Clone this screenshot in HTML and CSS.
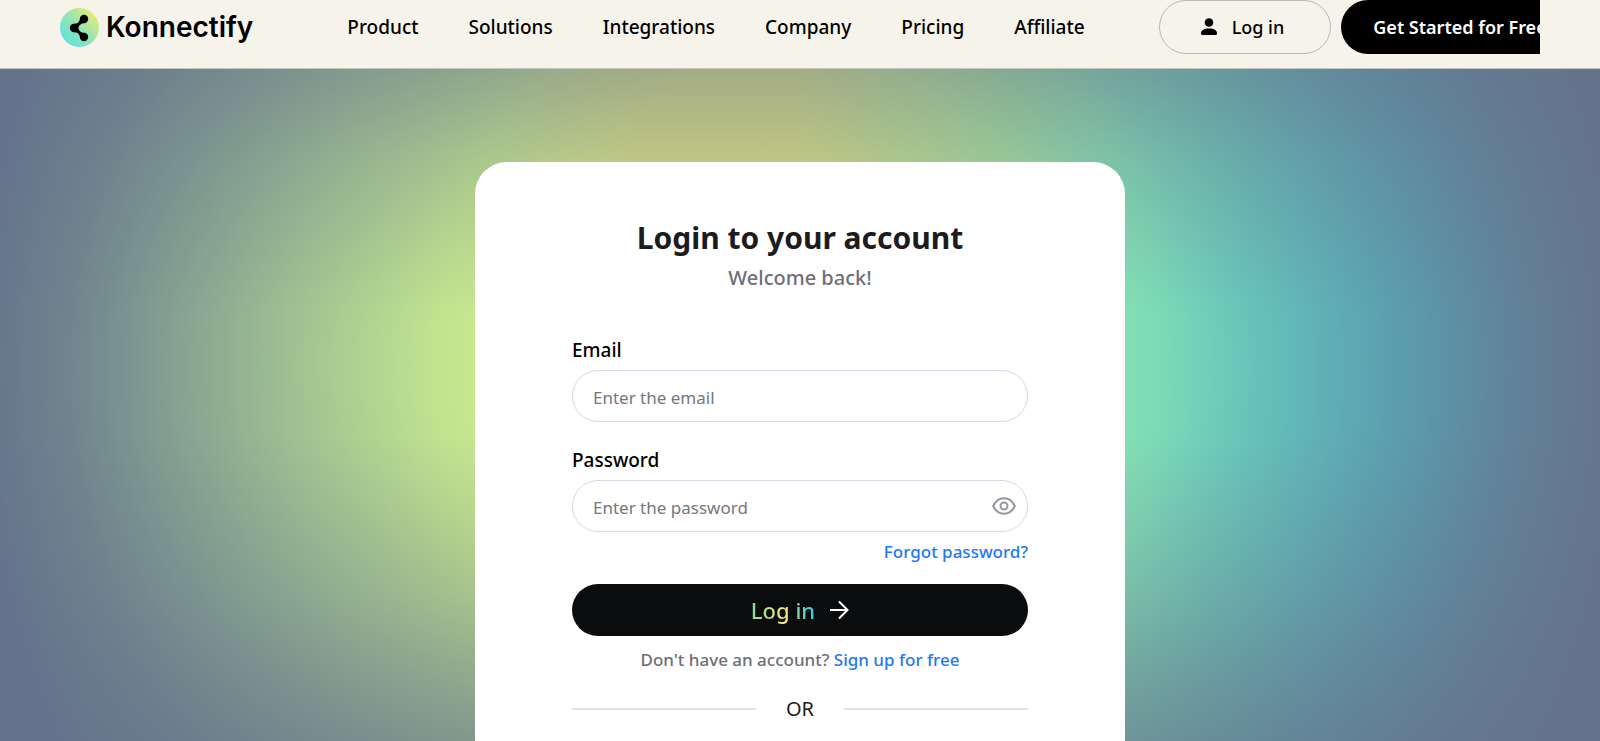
FILE: index.html
```
<!DOCTYPE html>
<html lang="en">
<head>
  <meta charset="UTF-8" />
  <meta name="viewport" content="width=device-width, initial-scale=1.0" />
  <title>Konnectify - Login</title>
  <link rel="stylesheet" href="styles.css">
</head>
<body>

  <header class="header">
    <div class="header-inner">
      <a class="logo" href="#">
        <svg class="logo-icon" viewBox="0 0 39 39" aria-hidden="true">
          <defs>
            <linearGradient id="logoGradient" x1="0.15" y1="0.85" x2="0.85" y2="0.15">
              <stop offset="0" stop-color="#62e3dc" />
              <stop offset="0.5" stop-color="#93e6b4" />
              <stop offset="1" stop-color="#e2ea7c" />
            </linearGradient>
          </defs>
          <circle cx="19.5" cy="19.5" r="19.5" fill="url(#logoGradient)" />
          <circle cx="14" cy="20" r="4.2" />
          <circle cx="24" cy="11" r="4.2" />
          <circle cx="24" cy="29" r="4.2" />
          <path d="M14 15.8C17 16 19.5 14 20 11L25 15C21.5 15 19 17 18.2 20C19 23 21.5 25 25 25L20 29C19.5 26 17 24 14 24.2Z" />
        </svg>
        <span>Konnectify</span>
      </a>

      <nav class="nav">
        <a href="#">Product</a>
        <a href="#">Solutions</a>
        <a href="#">Integrations</a>
        <a href="#">Company</a>
        <a href="#">Pricing</a>
        <a href="#">Affiliate</a>
      </nav>

      <div class="actions">
        <a class="btn-login" href="#">
          <svg width="18" height="18" viewBox="0 0 18 18" aria-hidden="true">
            <circle cx="9" cy="4.5" r="4.3" />
            <path d="M1 15.5C1 12 4 10.5 9 10.5S17 12 17 15.5Q17 17 15.5 17H2.5Q1 17 1 15.5Z" />
          </svg>
          Log in
        </a>
        <a class="btn-start" href="#">Get Started for Free</a>
      </div>
    </div>
  </header>

  <main class="main">
    <section class="card">
      <h1>Login to your account</h1>
      <p class="subtitle">Welcome back!</p>

      <form class="form">
        <label for="email">Email</label>
        <input type="email" id="email" placeholder="Enter the email" required />

        <label for="password">Password</label>
        <div class="password-box">
          <input type="password" id="password" placeholder="Enter the password" required />
          <button type="button" class="toggle" aria-label="Show password">
            <svg width="24" height="18" viewBox="0 0 24 18" aria-hidden="true">
              <path d="M1.2 9C3.5 4 7.5 1.2 12 1.2S20.5 4 22.8 9C20.5 14 16.5 16.8 12 16.8S3.5 14 1.2 9Z" />
              <circle cx="12" cy="9" r="3.5" />
            </svg>
          </button>
        </div>
        <a class="forgot" href="#">Forgot password?</a>

        <button type="submit" class="submit">
          <span>Log in</span>
          <svg width="20" height="20" viewBox="0 0 20 20" aria-hidden="true">
            <path d="M1 10H18M10 1.5L18.5 10L10 18.5" />
          </svg>
        </button>
      </form>

      <p class="signup">Don't have an account? <a href="#">Sign up for free</a></p>
      <div class="divider">OR</div>
    </section>
  </main>

</body>
</html>
```
FILE: styles.css
```
* {
  box-sizing: border-box;
}
body {
  display: flex;
  flex-direction: column;
  min-height: 100vh;
  margin: 0;
  font-family: "Noto Sans", "Open Sans", sans-serif;
  font-size: 18px;
  color: #000;
}
a {
  color: inherit;
  text-decoration: none;
}

/* header */
.header {
  padding: 0 60px;
  background: #f6f3eb;
  border-bottom: 1px solid #c4c5bc;
}
.header-inner {
  display: flex;
  align-items: flex-start;
  height: 68px;
  overflow: hidden;
  white-space: nowrap;
}
.header-inner > * {
  flex-shrink: 0;
  height: 54px;
}
.logo {
  display: flex;
  align-items: center;
  gap: 7px;
  font-family: Inter, sans-serif;
  font-size: 28px;
  font-weight: 600;
}
.logo-icon {
  width: 39px;
  height: 39px;
}
.nav {
  display: flex;
  align-items: center;
  gap: 50px;
  margin-left: 94px;
  font-size: 19px;
  font-weight: 500;
}
.actions {
  display: flex;
  gap: 10px;
  margin-left: 74px;
  font-weight: 500;
}
.btn-login {
  display: flex;
  align-items: center;
  gap: 14px;
  padding: 0 46px 0 40px;
  border: 1px solid #b9b8b3;
  border-radius: 27px;
}
.btn-start {
  display: flex;
  align-items: center;
  padding: 0 32px;
  border-radius: 27px;
  background: #000;
  color: #fff;
  font-weight: 600;
}

/* page background: colour bands fading out to slate */
.main {
  flex: 1;
  display: flex;
  justify-content: center;
  padding: 93px 20px 0;
  background:
    linear-gradient(rgba(101,116,140,0.48) 0%, rgba(101,116,140,0.25) 13%, rgba(101,116,140,0) 36%, rgba(101,116,140,0) 54%, rgba(101,116,140,0.25) 78%, rgba(101,116,140,0.58) 100%),
    radial-gradient(ellipse 51% 130% at 50% 44%, rgba(101,116,140,0) 35%, rgba(101,116,140,0.08) 45%, rgba(101,116,140,0.36) 62%, rgba(101,116,140,0.6) 75%, rgba(101,116,140,0.86) 89%, #65748c 100%),
    linear-gradient(90deg, #b4f0a0 0%, #c9ec8e 30%, #dce080 40%, #dce080 50%, #a9e298 62%, #86e4b4 70%, #66dccb 79%, #4ed4dc 88%, #4cc4d8 100%);
}

/* login card */
.card {
  width: 650px;
  padding: 52px 97px 18px;
  border-radius: 32px 32px 0 0;
  background: #fff;
  text-align: center;
}
.card h1 {
  margin: 0;
  font-size: 30px;
  line-height: 48px;
  font-weight: 700;
  color: #1c1c1f;
}
.subtitle {
  margin: 0 0 40px;
  font-size: 20px;
  line-height: 32px;
  font-weight: 500;
  color: #6f6e77;
}
.form {
  display: flex;
  flex-direction: column;
}
.form label {
  margin-bottom: 4px;
  font-size: 19px;
  line-height: 32px;
  font-weight: 500;
  text-align: left;
}
.form input {
  width: 100%;
  height: 52px;
  margin-bottom: 22px;
  padding: 2px 20px 0;
  border: 1px solid #d3dbe6;
  border-radius: 26px;
  background: #fff;
  font-family: inherit;
  font-size: 17px;
}
.form input::placeholder {
  color: #77767e;
}
.password-box {
  position: relative;
}
.password-box input {
  display: block;
  margin-bottom: 4px;
  padding-right: 50px;
}
.toggle {
  position: absolute;
  top: 17px;
  right: 12px;
  display: flex;
  padding: 0;
  border: none;
  background: none;
  cursor: pointer;
}
.toggle svg {
  fill: none;
  stroke: #97969f;
  stroke-width: 2;
}
.forgot,
.signup a {
  color: #1f78f5;
}
.forgot {
  align-self: flex-end;
  margin-bottom: 16px;
  line-height: 32px;
  font-size: 17px;
  font-weight: 500;
}
.submit {
  display: flex;
  align-items: center;
  justify-content: center;
  gap: 14px;
  height: 52px;
  border: none;
  border-radius: 26px;
  background: #0b0c0e;
  font-family: inherit;
  font-size: 22px;
  font-weight: 500;
  cursor: pointer;
}
.submit span {
  background: linear-gradient(90deg, #86dd9c, #f3e67a 55%, #86dd9c 72%, #22d3f5);
  -webkit-background-clip: text;
  background-clip: text;
  color: transparent;
}
.submit svg {
  fill: none;
  stroke: #fff;
  stroke-width: 2;
}
.signup {
  margin: 8px 0 16px;
  font-size: 17px;
  line-height: 32px;
  font-weight: 500;
  color: #6f6e77;
}
.divider {
  display: flex;
  align-items: center;
  gap: 30px;
  font-size: 20px;
  line-height: 34px;
  color: #1c1c1f;
}
.divider::before,
.divider::after {
  content: "";
  flex: 1;
  height: 2px;
  background: #e2e2e2;
}
```
